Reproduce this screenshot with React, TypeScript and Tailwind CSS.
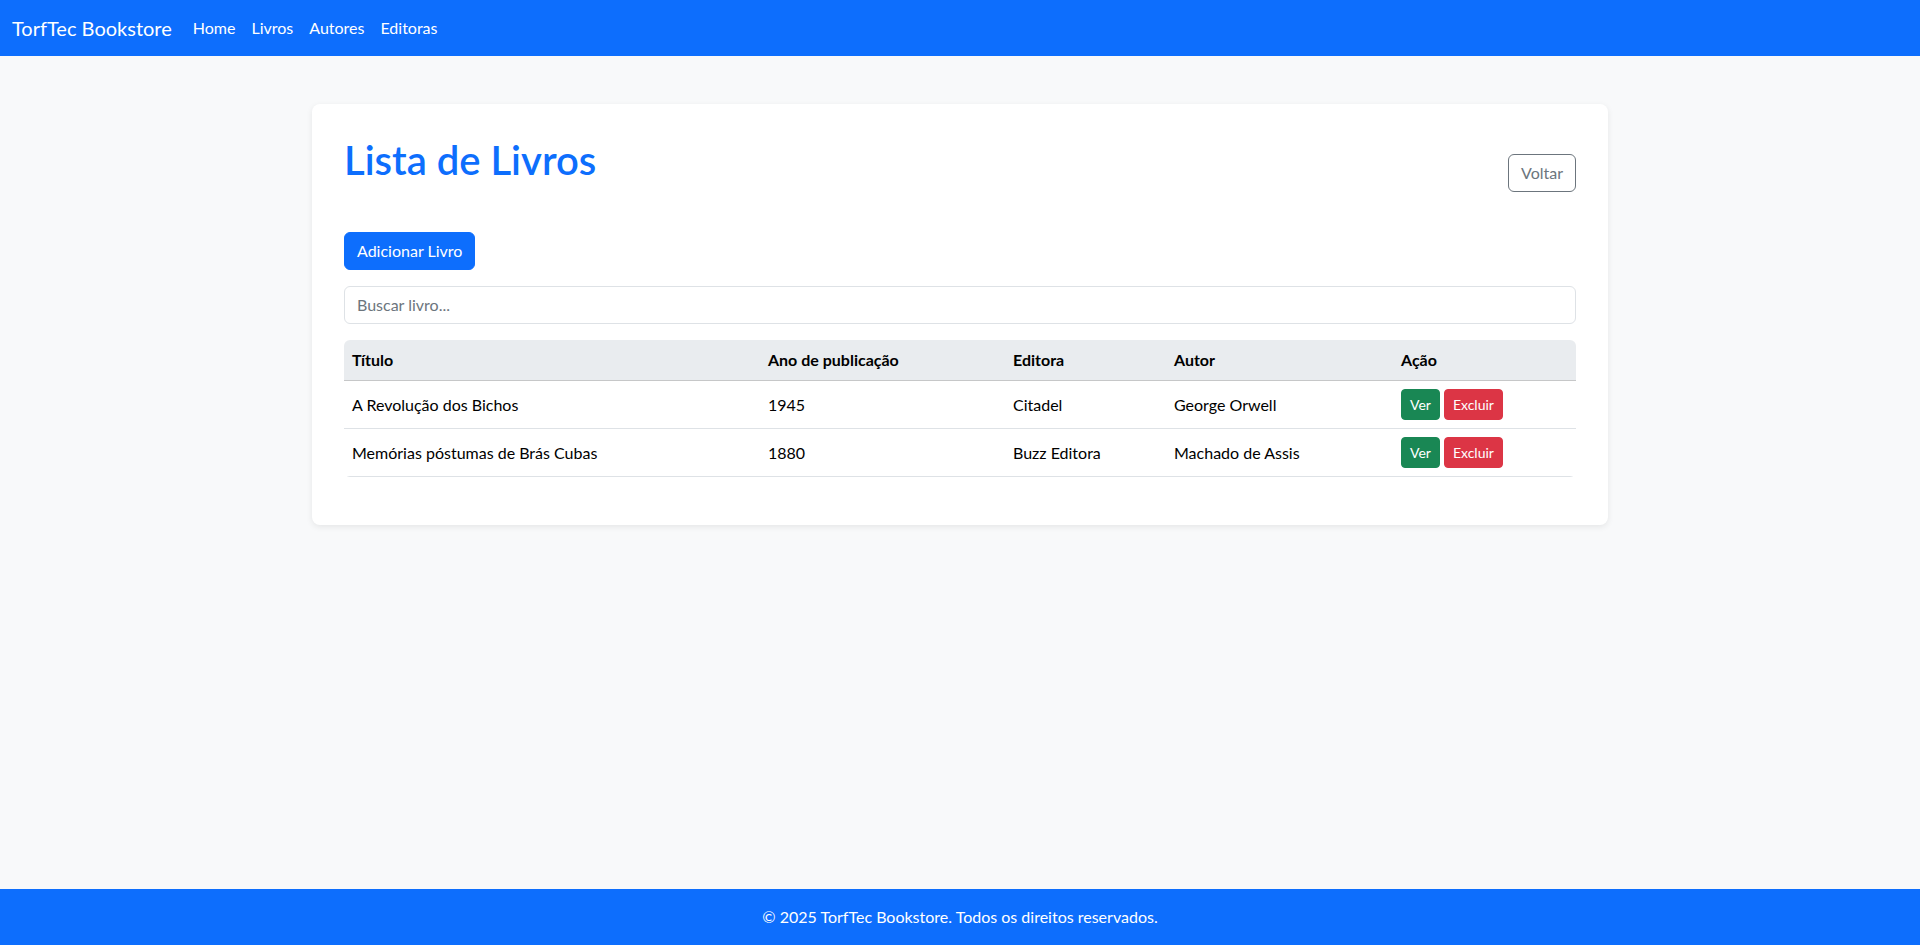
import React from "react";

type Book = {
  id: number;
  titulo: string;
  ano: number;
  editora: string;
  autor: string;
};

const BOOKS: Book[] = [
  { id: 1, titulo: "A Revolução dos Bichos", ano: 1945, editora: "Citadel", autor: "George Orwell" },
  { id: 2, titulo: "Memórias póstumas de Brás Cubas", ano: 1880, editora: "Buzz Editora", autor: "Machado de Assis" },
];

const font = { fontFamily: 'Lato, "Open Sans", sans-serif' };

export default function App() {
  return (
    <div
      className="flex min-h-screen flex-col bg-[#f8f9fa] text-[16px] leading-6 text-[#212529]"
      style={font}
    >
      {/* Navbar */}
      <nav className="flex h-14 items-center bg-[#0d6efd] px-3 text-white">
        <span className="mr-[13px] text-[20px] leading-[30px]">TorfTec Bookstore</span>
        <ul className="flex">
          {["Home", "Livros", "Autores", "Editoras"].map((l) => (
            <li key={l}>
              <a className="block px-2 py-2 text-white">{l}</a>
            </li>
          ))}
        </ul>
      </nav>

      <main className="flex-1">
        <div className="mx-auto mt-12 w-[1296px] rounded-lg bg-white p-8 shadow-[0_2px_6px_rgba(0,0,0,0.08)]">
          {/* Cabeçalho */}
          <div className="mb-[40px] flex items-end justify-between">
            <h1 className="mb-2 text-[40px] font-semibold leading-[48px] text-[#0d6efd]">Lista de Livros</h1>
            <button className="rounded-md border border-[#6c757d] px-3 py-1.5 text-[#6c757d]">Voltar</button>
          </div>

          <button className="mb-4 rounded-md border border-[#0d6efd] bg-[#0d6efd] px-3 py-1.5 text-white">
            Adicionar Livro
          </button>

          <input
            type="text"
            placeholder="Buscar livro..."
            className="mb-4 block w-full rounded-md border border-[#dee2e6] px-3 py-1.5 outline-none placeholder:text-[#6c757d]"
          />

          <div className="mb-4 overflow-hidden rounded-md">
            <table className="w-full table-fixed border-collapse">
              <thead>
                <tr className="bg-[#e9ecef] text-left text-black">
                  <th className="w-[416px] border-b border-[#c6c7c8] p-2 font-bold">Título</th>
                  <th className="w-[245px] border-b border-[#c6c7c8] p-2 font-bold">Ano de publicação</th>
                  <th className="w-[161px] border-b border-[#c6c7c8] p-2 font-bold">Editora</th>
                  <th className="w-[227px] border-b border-[#c6c7c8] p-2 font-bold">Autor</th>
                  <th className="border-b border-[#c6c7c8] p-2 font-bold">Ação</th>
                </tr>
              </thead>
              <tbody>
                {BOOKS.map((b) => (
                  <tr key={b.id} className="border-b border-[#dee2e6] align-middle text-black">
                    <td className="p-2">{b.titulo}</td>
                    <td className="p-2">{b.ano}</td>
                    <td className="p-2">{b.editora}</td>
                    <td className="p-2">{b.autor}</td>
                    <td className="p-2">
                      <div className="flex gap-1">
                        <button className="rounded border border-[#198754] bg-[#198754] px-2 py-1 text-[14px] leading-[21px] text-white">
                          Ver
                        </button>
                        <button className="rounded border border-[#dc3545] bg-[#dc3545] px-2 py-1 text-[14px] leading-[21px] text-white">
                          Excluir
                        </button>
                      </div>
                    </td>
                  </tr>
                ))}
              </tbody>
            </table>
          </div>
        </div>
      </main>

      <footer className="flex h-14 items-center justify-center bg-[#0d6efd] text-white">
        © 2025 TorfTec Bookstore. Todos os direitos reservados.
      </footer>
    </div>
  );
}
